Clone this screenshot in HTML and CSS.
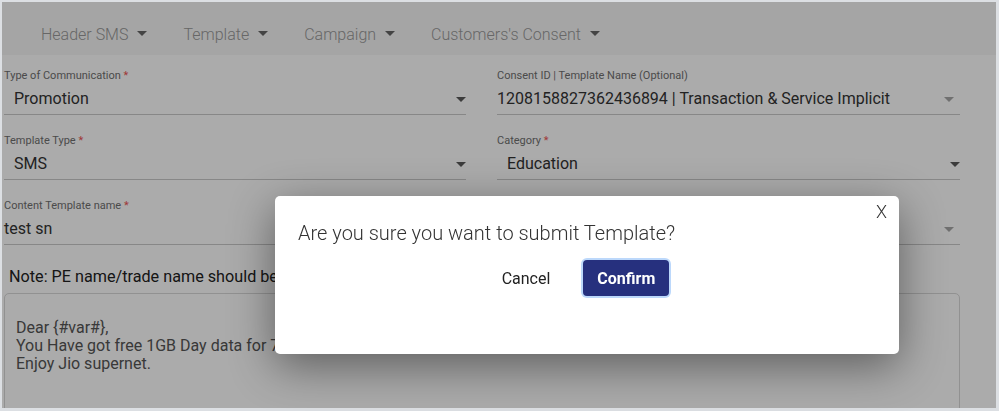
FILE: index.html
```html
<!DOCTYPE html>
<html>
<head>
<meta charset="utf-8">
<link rel="stylesheet" href="styles.css">
</head>
<body>
<div class="frame">
  <nav class="nav">
    <span class="nav-item">Header SMS <i class="caret"></i></span>
    <span class="nav-item">Template <i class="caret"></i></span>
    <span class="nav-item">Campaign <i class="caret"></i></span>
    <span class="nav-item">Customers's Consent <i class="caret"></i></span>
  </nav>
  <div class="form">
    <div class="field">
      <div class="label">Type of Communication <span class="req">*</span></div>
      <div class="select pad"><span>Promotion</span><i class="arrow"></i></div>
    </div>
    <div class="field">
      <div class="label">Consent ID | Template Name (Optional)</div>
      <div class="select pad-s dim"><span>1208158827362436894 | Transaction &amp; Service Implicit</span><i class="arrow light"></i></div>
    </div>
    <div class="field">
      <div class="label">Template Type <span class="req">*</span></div>
      <div class="select pad"><span>SMS</span><i class="arrow"></i></div>
    </div>
    <div class="field">
      <div class="label">Category <span class="req">*</span></div>
      <div class="select pad end"><span>Education</span><i class="arrow"></i></div>
    </div>
    <div class="field">
      <div class="label">Content Template name <span class="req">*</span></div>
      <div class="select"><span>test sn</span></div>
    </div>
    <div class="field">
      <div class="label">&nbsp;</div>
      <div class="select pad-s dim"><span>&nbsp;</span><i class="arrow light"></i></div>
    </div>
  </div>
  <p class="note">Note: PE name/trade name should be</p>
  <div class="textarea">Dear {#var#},<br>You Have got free 1GB Day data for 7<br>Enjoy Jio supernet.</div>
  <div class="overlay"></div>
</div>
<div class="modal">
  <button class="close">X</button>
  <p class="modal-title">Are you sure you want to submit Template?</p>
  <div class="actions">
    <button class="btn cancel">Cancel</button>
    <button class="btn confirm">Confirm</button>
  </div>
</div>
</body>
</html>
```
FILE: styles.css
```css
* { box-sizing: border-box; }
html, body { margin: 0; padding: 0; }
body {
  font-family: Roboto, "Liberation Sans", Arial, sans-serif;
  width: 999px;
  height: 411px;
  overflow: hidden;
  background: #dcdfe3;
}
.frame {
  position: relative;
  height: 411px;
  border-style: solid;
  border-color: #dcdfe3;
  border-width: 2px 3px 3px 2px;
  background: #fff;
  overflow: hidden;
}
.nav {
  height: 53px;
  background: #f6f6f6;
  display: flex;
  align-items: center;
  gap: 36px;
  padding-left: 39px;
  padding-top: 11px;
}
.nav-item {
  font-size: 16px;
  font-weight: 300;
  color: #9a9a9a;
  display: inline-flex;
  align-items: center;
  gap: 9px;
}
.caret {
  display: inline-block;
  width: 0; height: 0;
  border-left: 5px solid transparent;
  border-right: 5px solid transparent;
  border-top: 5px solid #666;
  margin-top: -2px;
}
.form {
  display: grid;
  grid-template-columns: 462px 463px;
  column-gap: 31px;
  row-gap: 19px;
  padding: 14px 0 0 2px;
}
.label {
  font-size: 11px;
  line-height: 13px;
  color: #707070;
  white-space: nowrap;
}
.req { color: #e55; }
.select {
  height: 33px;
  border-bottom: 1px solid #c9c9c9;
  display: flex;
  align-items: center;
  justify-content: space-between;
  font-size: 16px;
  line-height: 20px;
  color: #333;
  padding-top: 2px;
}
.select.pad { padding-left: 10px; }
.select.pad-s { padding-left: 0; padding-right: 6px; }
.select.end { padding-right: 0; }
.arrow {
  display: inline-block;
  width: 0; height: 0;
  border-left: 5px solid transparent;
  border-right: 5px solid transparent;
  border-top: 5px solid #5a5a5a;
}
.arrow.light { border-top-color: #a8a8a8; }
.note {
  margin: 22px 0 6px 7px;
  font-size: 16.2px;
  line-height: 20px;
  color: #222;
  white-space: nowrap;
}
.textarea {
  margin-left: 2px;
  width: 956px;
  height: 140px;
  border: 1px solid #d8d8d8;
  border-radius: 5px;
  padding: 25px 11px;
  font-size: 16px;
  line-height: 18px;
  color: #555;
}
.overlay {
  position: absolute;
  inset: 0;
  background: rgba(0, 0, 0, 0.33);
}
.modal {
  position: fixed;
  left: 275px;
  top: 196px;
  width: 624px;
  height: 158px;
  background: #fff;
  border-radius: 5px;
  box-shadow: 0 12px 45px rgba(0, 0, 0, 0.45);
}
.close {
  position: absolute;
  right: 10px;
  top: 3px;
  border: 0;
  background: none;
  font-family: Roboto, "Liberation Sans", Arial, sans-serif;
  font-size: 18px;
  font-weight: 300;
  color: #333;
  padding: 2px;
}
.modal-title {
  margin: 0;
  padding: 24px 0 0 23px;
  font-size: 20px;
  line-height: 26px;
  font-weight: 300;
  color: #333;
}
.actions {
  display: flex;
  justify-content: center;
  gap: 19px;
  padding-right: 17px;
  margin-top: 14px;
}
.btn {
  font-family: Roboto, "Liberation Sans", Arial, sans-serif;
  font-size: 16px;
  height: 36px;
  border: 0;
  border-radius: 4px;
  cursor: pointer;
}
.cancel {
  background: none;
  color: #222;
  padding: 0 14px;
}
.confirm {
  background: #26307e;
  color: #fff;
  font-weight: 700;
  width: 86px;
  box-shadow: 0 0 0 2px #bcd8fb;
}
```
